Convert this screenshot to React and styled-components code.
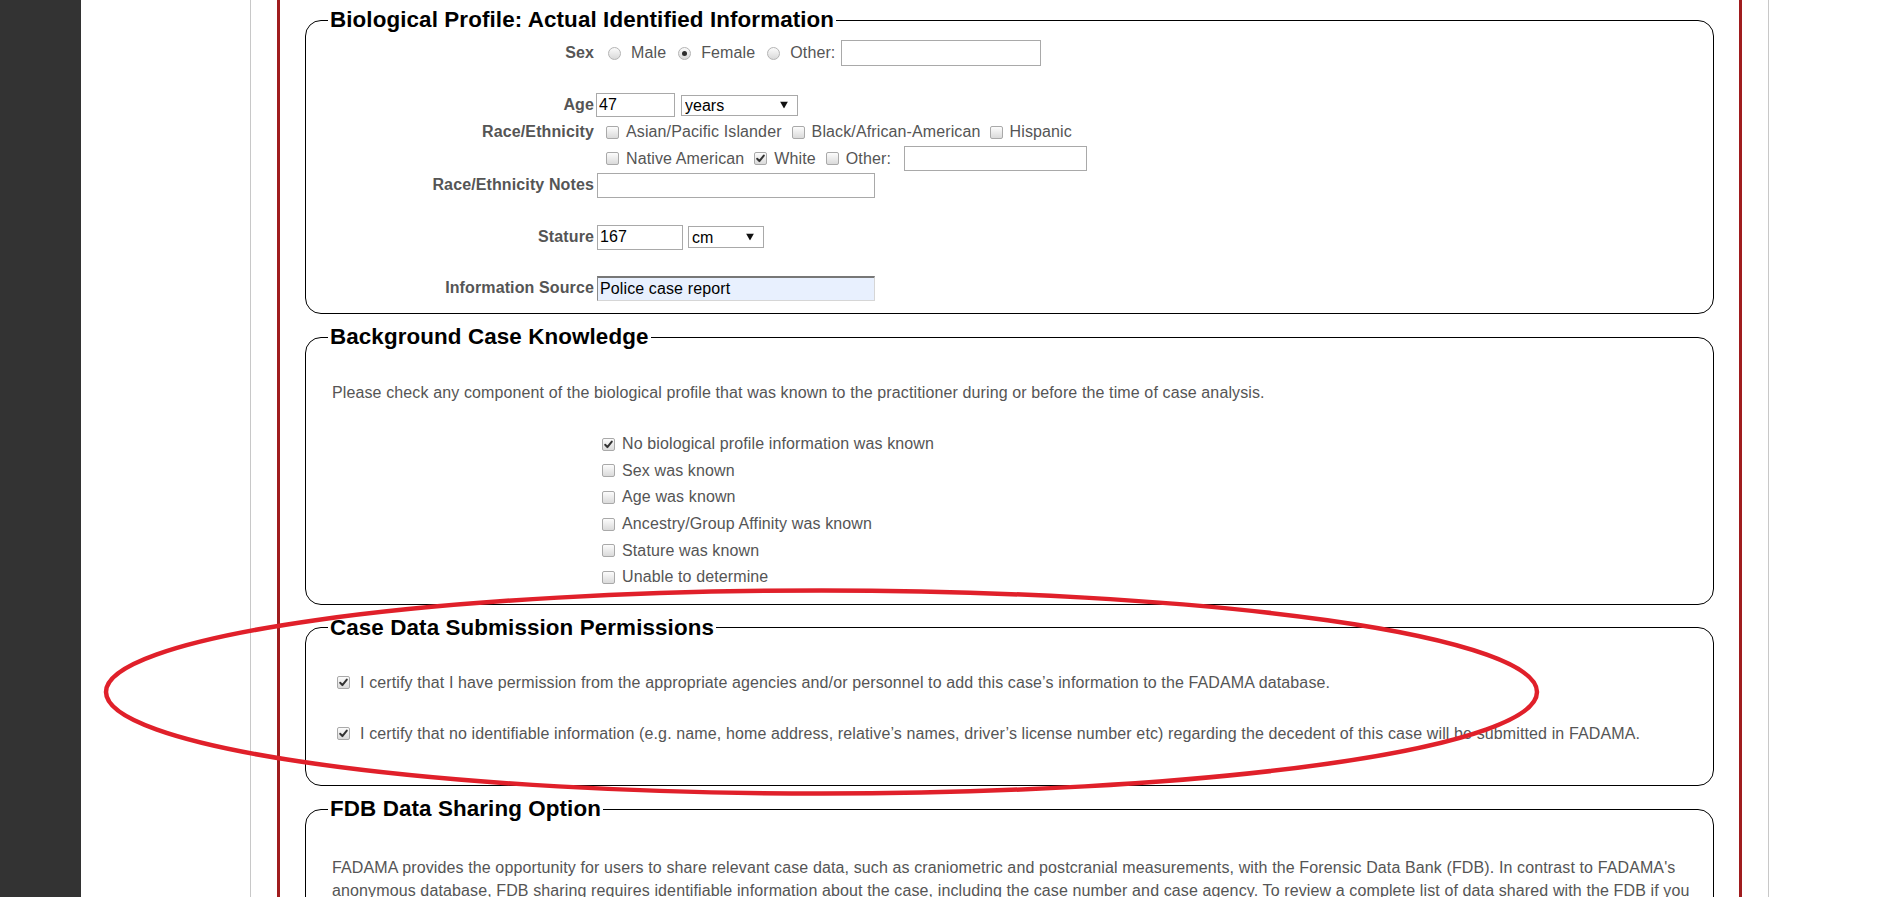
import React from 'react';
import styled, { createGlobalStyle } from 'styled-components';

const GlobalStyle = createGlobalStyle`
  html, body { margin: 0; padding: 0; background: #fff; overflow: hidden; }
  body { font-family: "Liberation Sans", Arial, sans-serif; font-size: 16px; color: #555; letter-spacing: 0.12px; }
  *, *::before, *::after { box-sizing: border-box; }
`;

const Page = styled.div`
  position: relative;
  display: flex;
  height: 897px;
  overflow: hidden;
`;

const SideBar = styled.aside`
  flex: 0 0 81px;
  background: #333;
`;

const Main = styled.main`
  flex: 1;
  display: flex;
  padding: 0 129px 0 169px;
`;

const Sheet = styled.div`
  flex: 1;
  border-left: 1px solid #c8c8c8;
  border-right: 1px solid #c8c8c8;
  padding: 0 26px;
`;

const Frame = styled.div`
  border: 3px solid #a01c1e;
  border-top: none;
  padding: 7px 25px 20px;
  min-height: 100%;
`;

const Section = styled.fieldset`
  margin: ${p => p.$mt || 0}px 0 0;
  padding: 0 ${p => p.$pr ?? 25}px ${p => p.$pb || 0}px 26px;
  border: 1px solid #000;
  border-radius: 16px;
  min-width: 0;
`;

const Legend = styled.legend`
  font-size: 22.4px;
  font-weight: bold;
  color: #000;
  line-height: 26px;
  letter-spacing: 0.1px;
  padding: 0 2px;
  margin-left: -4px;
`;

const FieldRow = styled.div`
  display: grid;
  grid-template-columns: 262px 1fr;
  column-gap: 3px;
  align-items: ${p => (p.$top ? 'start' : 'center')};
  margin-top: ${p => p.$mt || 0}px;
`;

const FieldLabel = styled.span`
  text-align: right;
  font-weight: bold;
  color: #555;
  line-height: ${p => p.$lh || 26}px;
  white-space: nowrap;
`;

const Controls = styled.div`
  display: flex;
  flex-direction: column;
`;

const ControlLine = styled.div`
  display: flex;
  align-items: center;
  height: ${p => p.$h || 26}px;
`;

const Option = styled.label`
  display: inline-flex;
  align-items: center;
  gap: ${p => p.$gap || 7}px;
  margin-left: ${p => p.$ml || 0}px;
  color: #555;
  white-space: nowrap;
`;

const RadioDot = styled.span`
  position: relative;
  display: inline-block;
  width: 13px;
  height: 13px;
  border-radius: 50%;
  border: 1px solid #b4b4b4;
  background: linear-gradient(#fbfbfb, #d9d9d9);
  flex: none;
  &::after {
    content: '';
    display: ${p => (p.$checked ? 'block' : 'none')};
    position: absolute;
    left: 3px;
    top: 3px;
    width: 5px;
    height: 5px;
    border-radius: 50%;
    background: #2e2e2e;
  }
`;

const Box = styled.span`
  display: inline-flex;
  align-items: center;
  justify-content: center;
  width: 13px;
  height: 13px;
  border: 1px solid #a9a9a9;
  border-radius: 2px;
  background: linear-gradient(#fcfcfc, #dadada);
  flex: none;
  margin-left: ${p => p.$ml || 0}px;
`;

const Checkbox = ({ checked, ml }) => (
  <Box $ml={ml}>
    {checked && (
      <svg width="11" height="11" viewBox="0 0 11 11">
        <path d="M2.2 5.8 L4.4 8.1 L8.8 2.6" stroke="#333" strokeWidth="2" fill="none" strokeLinecap="round" strokeLinejoin="round" />
      </svg>
    )}
  </Box>
);

const TextInput = styled.input`
  width: ${p => p.$w}px;
  height: ${p => p.$h || 25}px;
  margin: 0 0 0 ${p => p.$ml || 0}px;
  padding: 1px 2px;
  border: 1px solid #a9a9a9;
  border-radius: 0;
  font: 16px "Liberation Sans", Arial, sans-serif;
  letter-spacing: 0.12px;
  color: #000;
  background: ${p => (p.$filled ? '#e8f0fe' : '#fff')};
  ${p => p.$filled && `
    border-color: #777 #d6d6d6 #d6d6d6 #8a8a8a;
    border-top-width: 2px;
  `}
  outline: none;
`;

const SelectWrap = styled.span`
  position: relative;
  display: inline-flex;
  margin-left: ${p => p.$ml || 0}px;
`;

const Select = styled.select`
  appearance: none;
  -webkit-appearance: none;
  width: ${p => p.$w}px;
  height: ${p => p.$h || 22}px;
  margin: 0;
  padding: 0 0 0 3px;
  border: 1px solid #a9a9a9;
  border-radius: 0;
  background: #fff;
  font: 16px "Liberation Sans", Arial, sans-serif;
  color: #000;
`;

const Caret = styled.svg`
  position: absolute;
  right: 10px;
  top: 50%;
  transform: translateY(-50%);
  pointer-events: none;
`;

const UnitSelect = ({ w, h, ml, value, options }) => (
  <SelectWrap $ml={ml}>
    <Select $w={w} $h={h} defaultValue={value}>
      {options.map(o => (
        <option key={o}>{o}</option>
      ))}
    </Select>
    <Caret width="8" height="7" viewBox="0 0 8 7">
      <polygon points="0,0 8,0 4,7" fill="#111" />
    </Caret>
  </SelectWrap>
);

const Note = styled.p`
  margin: ${p => p.$mt || 0}px 0 0;
  line-height: 23px;
  color: #555;
`;

const CheckList = styled.ul`
  list-style: none;
  margin: ${p => p.$mt || 0}px 0 0 270px;
  padding: 0;
`;

const CheckItem = styled.li`
  display: flex;
  align-items: center;
  gap: 7px;
  height: 26.6px;
  color: #555;
`;

const Certify = styled.label`
  display: flex;
  align-items: center;
  gap: 10px;
  height: 23px;
  padding-left: 5px;
  margin-top: ${p => p.$mt || 0}px;
  color: #555;
  white-space: nowrap;
`;

const Overlay = styled.svg`
  position: absolute;
  left: 0;
  top: 0;
  pointer-events: none;
`;

const knowledge = [
  ['No biological profile information was known', true],
  ['Sex was known', false],
  ['Age was known', false],
  ['Ancestry/Group Affinity was known', false],
  ['Stature was known', false],
  ['Unable to determine', false],
];

export default function App() {
  return (
    <>
      <GlobalStyle />
      <Page>
        <SideBar />
        <Main>
          <Sheet>
            <Frame>
              <Section $pb={12}>
                <Legend>Biological Profile: Actual Identified Information</Legend>

                <FieldRow $mt={7}>
                  <FieldLabel>Sex</FieldLabel>
                  <ControlLine>
                    <Option $gap={10} $ml={11}><RadioDot />Male</Option>
                    <Option $gap={10} $ml={12}><RadioDot $checked />Female</Option>
                    <Option $gap={10} $ml={12}><RadioDot />Other:</Option>
                    <TextInput $w={200} $h={26} $ml={6} defaultValue="" />
                  </ControlLine>
                </FieldRow>

                <FieldRow $mt={26}>
                  <FieldLabel>Age</FieldLabel>
                  <ControlLine>
                    <TextInput $w={79} $h={24} $ml={-1} defaultValue="47" />
                    <UnitSelect w={117} h={21} ml={6} value="years" options={['years', 'months', 'weeks', 'days']} />
                  </ControlLine>
                </FieldRow>

                <FieldRow $mt={1} $top>
                  <FieldLabel $lh={26.5}>Race/Ethnicity</FieldLabel>
                  <Controls>
                    <ControlLine $h={26.5}>
                      <Option $ml={9}><Checkbox />Asian/Pacific Islander</Option>
                      <Option $ml={10}><Checkbox />Black/African-American</Option>
                      <Option $ml={9}><Checkbox />Hispanic</Option>
                    </ControlLine>
                    <ControlLine $h={26.5}>
                      <Option $ml={9}><Checkbox />Native American</Option>
                      <Option $ml={10}><Checkbox checked />White</Option>
                      <Option $ml={10}><Checkbox />Other:</Option>
                      <TextInput $w={183} $ml={13} defaultValue="" />
                    </ControlLine>
                  </Controls>
                </FieldRow>

                <FieldRow>
                  <FieldLabel>Race/Ethnicity Notes</FieldLabel>
                  <ControlLine>
                    <TextInput $w={278} defaultValue="" />
                  </ControlLine>
                </FieldRow>

                <FieldRow $mt={26}>
                  <FieldLabel>Stature</FieldLabel>
                  <ControlLine>
                    <TextInput $w={86} defaultValue="167" />
                    <UnitSelect w={76} h={22} ml={5} value="cm" options={['cm', 'in']} />
                  </ControlLine>
                </FieldRow>

                <FieldRow $mt={25}>
                  <FieldLabel>Information Source</FieldLabel>
                  <ControlLine>
                    <TextInput $w={278} $filled defaultValue="Police case report" />
                  </ControlLine>
                </FieldRow>
              </Section>

              <Section $mt={10} $pb={13}>
                <Legend>Background Case Knowledge</Legend>
                <Note $mt={31}>
                  Please check any component of the biological profile that was known to the practitioner during or before the time of case analysis.
                </Note>
                <CheckList $mt={27}>
                  {knowledge.map(([text, checked]) => (
                    <CheckItem key={text}>
                      <Checkbox checked={checked} />
                      {text}
                    </CheckItem>
                  ))}
                </CheckList>
              </Section>

              <Section $mt={10} $pb={40}>
                <Legend>Case Data Submission Permissions</Legend>
                <Certify $mt={30.5}>
                  <Checkbox checked />
                  I certify that I have permission from the appropriate agencies and/or personnel to add this case’s information to the FADAMA database.
                </Certify>
                <Certify $mt={28}>
                  <Checkbox checked />
                  I certify that no identifiable information (e.g. name, home address, relative’s names, driver’s license number etc) regarding the decedent of this case will be submitted in FADAMA.
                </Certify>
              </Section>

              <Section $mt={10} $pb={20} $pr={14}>
                <Legend>FDB Data Sharing Option</Legend>
                <Note $mt={34}>
                  FADAMA provides the opportunity for users to share relevant case data, such as craniometric and postcranial measurements, with the Forensic Data Bank (FDB). In contrast to FADAMA's anonymous database, FDB sharing requires identifiable information about the case, including the case number and case agency. To review a complete list of data shared with the FDB if you choose to participate, please see the FDB data sharing documentation.
                </Note>
              </Section>
            </Frame>
          </Sheet>
        </Main>
        <Overlay width="1898" height="897" viewBox="0 0 1898 897">
          <ellipse cx="821.5" cy="692" rx="715.5" ry="101.5" fill="none" stroke="#e0202a" strokeWidth="4.5" />
        </Overlay>
      </Page>
    </>
  );
}
